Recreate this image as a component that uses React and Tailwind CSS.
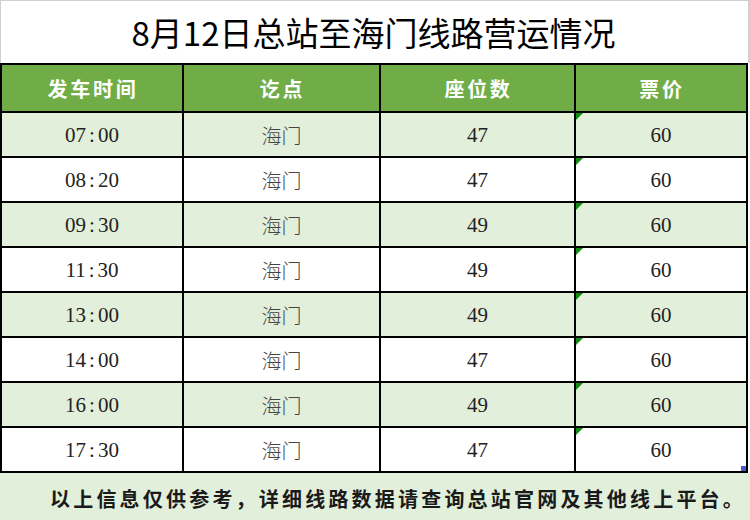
import React from 'react';

const rows = [
  { time: '07', min: '00', stop: '海门', seats: 47, price: 60 },
  { time: '08', min: '20', stop: '海门', seats: 47, price: 60 },
  { time: '09', min: '30', stop: '海门', seats: 49, price: 60 },
  { time: '11', min: '30', stop: '海门', seats: 49, price: 60 },
  { time: '13', min: '00', stop: '海门', seats: 49, price: 60 },
  { time: '14', min: '00', stop: '海门', seats: 47, price: 60 },
  { time: '16', min: '00', stop: '海门', seats: 49, price: 60 },
  { time: '17', min: '30', stop: '海门', seats: 47, price: 60 },
];

const cjk = { fontFamily: '"Noto Sans CJK SC", "Noto Sans", sans-serif' };
const serif = { fontFamily: '"Liberation Serif", "Noto Sans CJK SC", serif' };

export default function App() {
  return (
    <div className="w-[750px] h-[520px] bg-white overflow-hidden flex flex-col" style={cjk}>
      {/* title */}
      <div className="h-[63px] w-[750px] border-t border-l border-r-2 border-[#cfcfcf] flex items-center justify-center">
        <h1 className="text-[33px] text-black leading-none pr-[2px]">8月12日总站至海门线路营运情况</h1>
      </div>

      {/* table */}
      <div className="w-[748px] bg-black p-[2px] grid grid-cols-[180px_195px_193px_170px] gap-[2px]">
        {['发车时间', '讫点', '座位数', '票价'].map((h) => (
          <div key={h} className="h-[46px] bg-[#70ad47] flex items-center justify-center text-white font-bold text-[20px] tracking-[2.7px] pl-[2px] pt-[1px]">
            {h}
          </div>
        ))}
        {rows.map((r, i) => {
          const bg = i % 2 === 0 ? 'bg-[#e2efda]' : 'bg-white';
          const last = i === rows.length - 1;
          return (
            <React.Fragment key={i}>
              <div className={`h-[43px] ${bg} flex items-center justify-center text-[21px] text-[#222] pt-[3px]`} style={serif}>
                {r.time}<span className="px-[3px]">:</span>{r.min}
              </div>
              <div className={`h-[43px] ${bg} flex items-center justify-center text-[20px] text-[#444] font-light pt-[2px]`}>
                {r.stop}
              </div>
              <div className={`h-[43px] ${bg} flex items-center justify-center text-[21px] text-[#222] pt-[3px]`} style={serif}>
                {r.seats}
              </div>
              <div className={`relative h-[43px] ${bg} flex items-center justify-center text-[21px] text-[#222] pt-[3px]`} style={serif}>
                <svg className="absolute left-0 top-0" width="7" height="7" viewBox="0 0 7 7">
                  <polygon points="0,0 7,0 0,7" fill="#138a13" />
                </svg>
                {r.price}
                {last && <span className="absolute right-0 bottom-0 w-[5px] h-[5px] bg-[#4a5cc8]" />}
              </div>
            </React.Fragment>
          );
        })}
      </div>

      {/* footer */}
      <div className="flex-1 w-[750px] bg-[#e2efda] flex items-center pl-[50px]">
        <p className="text-[20px] font-bold text-[#1a1a1a] tracking-[3.2px] leading-none pt-[4px]">
          以上信息仅供参考，详细线路数据请查询总站官网及其他线上平台。
        </p>
      </div>
    </div>
  );
}
